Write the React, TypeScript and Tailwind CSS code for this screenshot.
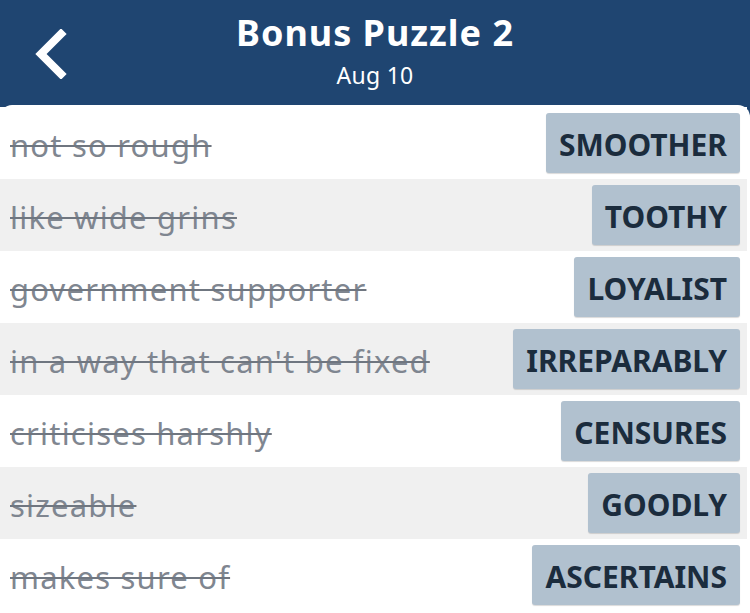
import React from "react";

interface Clue {
  clue: string;
  answer: string;
}

const clues: Clue[] = [
  { clue: "not so rough", answer: "SMOOTHER" },
  { clue: "like wide grins", answer: "TOOTHY" },
  { clue: "government supporter", answer: "LOYALIST" },
  { clue: "in a way that can't be fixed", answer: "IRREPARABLY" },
  { clue: "criticises harshly", answer: "CENSURES" },
  { clue: "sizeable", answer: "GOODLY" },
  { clue: "makes sure of", answer: "ASCERTAINS" },
];

export default function App() {
  return (
    <main
      className="w-[750px] h-[613px] overflow-hidden bg-[#1f4571]"
      style={{ fontFamily: "'Noto Sans', Lato, sans-serif" }}
    >
      {/* Header */}
      <header className="relative h-[105px] flex flex-col items-center text-white">
        <button className="absolute left-[30px] top-[28px] w-[40px] h-[52px] flex items-center justify-center">
          <svg width="36" height="50" viewBox="0 0 36 50">
            <path
              d="M29 5 L9 25 L29 45"
              fill="none"
              stroke="white"
              strokeWidth="8"
              strokeLinecap="square"
              strokeLinejoin="miter"
            />
          </svg>
        </button>
        <h1 className="mt-[9px] text-[36px] leading-[48px] font-bold tracking-[1px]">Bonus Puzzle 2</h1>
        <p className="text-[23px] leading-[30px] mt-[3px] tracking-[0.3px]">Aug 10</p>
      </header>

      {/* Clue list */}
      <section className="bg-white rounded-t-[12px] pt-[2px] h-[508px]">
        {clues.map((c, i) => (
          <div
            key={c.answer}
            className={`h-[72px] mr-[3px] flex items-center justify-between pl-[10px] pr-[7px] ${
              i % 2 === 1 ? "bg-[#f0f0f0]" : "bg-white"
            }`}
          >
            <span className="pt-[4px] text-[31px] tracking-[1.2px] text-[#7f8690] line-through decoration-[2px] decoration-[#6f7680]">
              {c.clue}
            </span>
            <span className="h-[60px] px-[13px] pt-[2px] flex items-center bg-[#b1c1cf] rounded-[3px] shadow-[0_1px_1px_rgba(0,0,0,0.15)] text-[30px] font-bold text-[#1b2c3d]">
              {c.answer}
            </span>
          </div>
        ))}
      </section>
    </main>
  );
}
